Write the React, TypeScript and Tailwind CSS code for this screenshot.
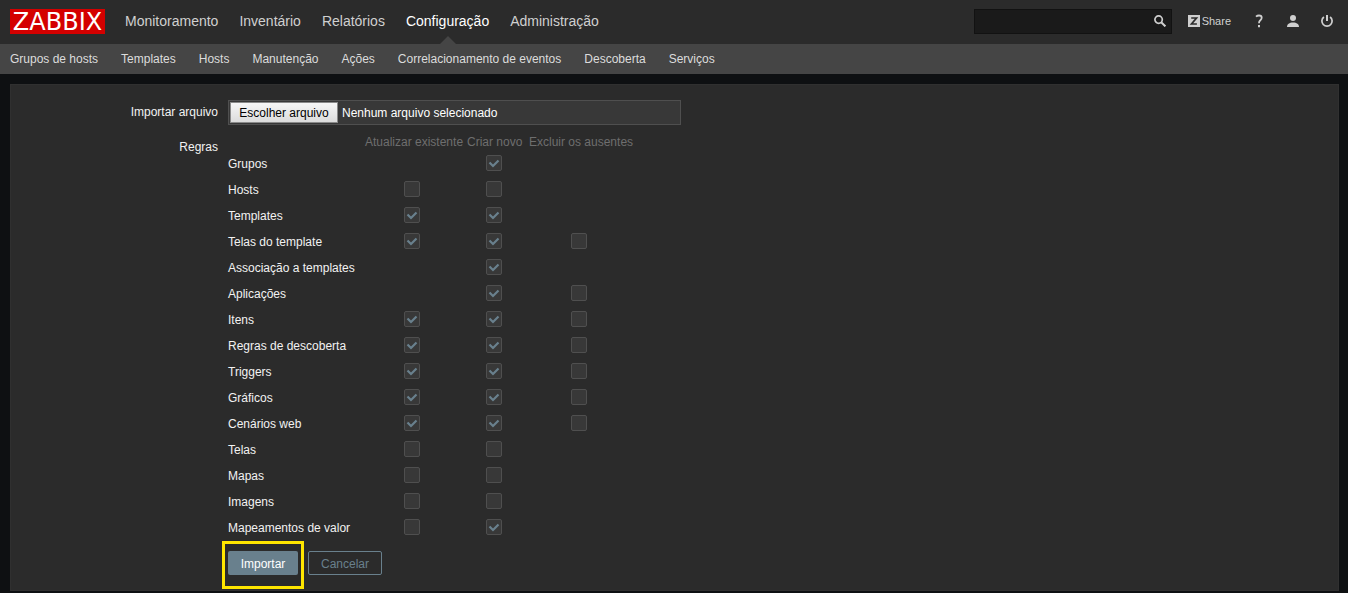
import { useState } from "react";

const mainMenu = ["Monitoramento", "Inventário", "Relatórios", "Configuração", "Administração"];
const subMenu = [
  "Grupos de hosts",
  "Templates",
  "Hosts",
  "Manutenção",
  "Ações",
  "Correlacionamento de eventos",
  "Descoberta",
  "Serviços",
];
const columns = ["Atualizar existente", "Criar novo", "Excluir os ausentes"];

type Cell = boolean | null;
const rules: { name: string; cells: [Cell, Cell, Cell] }[] = [
  { name: "Grupos", cells: [null, true, null] },
  { name: "Hosts", cells: [false, false, null] },
  { name: "Templates", cells: [true, true, null] },
  { name: "Telas do template", cells: [true, true, false] },
  { name: "Associação a templates", cells: [null, true, null] },
  { name: "Aplicações", cells: [null, true, false] },
  { name: "Itens", cells: [true, true, false] },
  { name: "Regras de descoberta", cells: [true, true, false] },
  { name: "Triggers", cells: [true, true, false] },
  { name: "Gráficos", cells: [true, true, false] },
  { name: "Cenários web", cells: [true, true, false] },
  { name: "Telas", cells: [false, false, null] },
  { name: "Mapas", cells: [false, false, null] },
  { name: "Imagens", cells: [false, false, null] },
  { name: "Mapeamentos de valor", cells: [false, true, null] },
];

function CheckBox({ label, initial }: { label: string; initial: boolean }) {
  return (
    <span className="mx-auto grid size-4">
      <input
        type="checkbox"
        aria-label={label}
        defaultChecked={initial}
        className="peer col-start-1 row-start-1 size-4 appearance-none rounded-xs border border-[#4f4f4f] bg-[#383838]"
      />
      <svg
        viewBox="0 0 16 16"
        className="pointer-events-none invisible col-start-1 row-start-1 size-4 peer-checked:visible"
        fill="none"
        stroke="#69808d"
        strokeWidth="2.2"
      >
        <path d="M3.5 7.5 7 11l5.5-5.5" />
      </svg>
    </span>
  );
}

function Header() {
  return (
    <header>
      <div className="flex h-11 items-center bg-[#2b2b2b] pr-[15px] pl-2.5">
        <a
          href="#home"
          className="mb-0.5 flex h-[25px] w-[95px] items-center justify-center bg-[#d40000] pt-0.5 font-['DejaVu_Sans',sans-serif] text-2xl leading-none text-white"
        >
          ZABBIX
        </a>
        <nav aria-label="Principal" className="ml-5 flex gap-[21px] text-sm">
          {mainMenu.map((item) => {
            const active = item === "Configuração";
            return (
              <a
                key={item}
                href="#menu"
                aria-current={active ? "page" : undefined}
                className={active ? "relative flex h-11 items-center text-white" : "flex h-11 items-center text-[#d0d0d0]"}
              >
                <span className="pb-0.5">{item}</span>
                {active && (
                  <svg viewBox="0 0 16 8" className="absolute bottom-0 left-1/2 h-2 w-4 -translate-x-1/2" fill="#454545">
                    <path d="M0 8 8 0l8 8z" />
                  </svg>
                )}
              </a>
            );
          })}
        </nav>
        <div className="ml-auto flex items-center pb-0.5">
          <form
            role="search"
            className="flex h-[25px] w-[198px] items-center border border-[#121212] bg-[#1a1a1a]"
            onSubmit={(e) => e.preventDefault()}
          >
            <input type="text" aria-label="Pesquisar" className="min-w-0 flex-1 bg-transparent px-1 text-xs text-white outline-none" />
            <button type="submit" aria-label="Pesquisar" className="grid h-6 w-[22px] place-items-center">
              <svg viewBox="0 0 12 12" className="size-3" fill="none" stroke="#cfcfcf">
                <circle cx="4.6" cy="4.6" r="3.7" strokeWidth="1.7" />
                <path d="M7.2 7.2 11.4 11.4" strokeWidth="2" />
              </svg>
            </button>
          </form>
          <a href="#share" className="ml-4 flex items-center gap-0.5 text-[11px] leading-none text-[#d0d0d0]">
            <svg viewBox="0 0 12 12" className="size-3">
              <path d="M0 0h12v12H0z" fill="#cfcfcf" />
              <path d="M3.2 3h5.3L3.5 9h5.4" fill="none" stroke="#2b2b2b" strokeWidth="1.7" />
            </svg>
            <span>Share</span>
          </a>
          <a href="#help" aria-label="Ajuda" className="ml-[22px] grid w-3 place-items-center">
            <svg viewBox="0 0 12 14" className="h-3.5 w-3" fill="none" stroke="#cfcfcf" strokeWidth="1.8">
              <path d="M3 2.6C3.900 1.800 4.800 1.500 6 1.500c1.800 0 2.700.9 2.700 2.200 0 1.400-.8 2-1.600 2.800C6.300 7.200 6 7.800 6 9.200" />
              <path d="M6 11v2.200" strokeWidth="2" />
            </svg>
          </a>
          <a href="#user" aria-label="Perfil" className="ml-[22px]">
            <svg viewBox="0 0 12 12" className="size-3" fill="#cfcfcf">
              <circle cx="6" cy="3" r="3" />
              <path d="M0 12c0-3 2.300-4.500 6-4.500s6 1.500 6 4.500z" />
            </svg>
          </a>
          <a href="#logout" aria-label="Sair" className="ml-[22px]">
            <svg viewBox="0 0 12 12" className="size-3" fill="none" stroke="#cfcfcf" strokeWidth="1.700">
              <path d="M2.900 2A5.100 5.100 0 1 0 9.100 2" />
              <path d="M6 0v6" strokeWidth="2" />
            </svg>
          </a>
        </div>
      </div>
      <nav aria-label="Secundário" className="flex h-[30px] items-center gap-[23px] bg-[#454545] pl-2.5 text-xs text-[#dcdcdc]">
        {subMenu.map((item) => (
          <a key={item} href="#section">
            {item}
          </a>
        ))}
      </nav>
    </header>
  );
}

export default function App() {
  const [file, setFile] = useState("Nenhum arquivo selecionado");
  return (
    <div className="min-h-screen bg-[#0e1012] font-['Liberation_Sans',Arial,sans-serif] text-xs text-[#f2f2f2]">
      <Header />
      <main className="mt-2.5 mr-[9px] ml-2.5 border border-[#303030] bg-[#2b2b2b] pt-[15px] pb-px">
        <form onSubmit={(e) => e.preventDefault()}>
          <div className="flex gap-2.5">
            <label htmlFor="import-file" className="w-[207px] pt-1 text-right">
              Importar arquivo
            </label>
            <div className="relative flex h-[25px] w-[453px] items-center border border-[#4f4f4f] bg-[#383838] px-px">
              <input
                id="import-file"
                type="file"
                className="peer sr-only"
                onChange={(e) => setFile(e.target.files?.[0]?.name ?? "Nenhum arquivo selecionado")}
              />
              <label
                htmlFor="import-file"
                className="flex h-[21px] w-[108px] items-center justify-center border border-[#8a8a8a] bg-linear-to-b from-[#f6f6f6] to-[#dcdcdc] text-black"
              >
                Escolher arquivo
              </label>
              <span className="ml-1 text-white">{file}</span>
            </div>
          </div>

          <div className="mt-2.5 flex gap-2.5">
            <span id="rules-label" className="w-[207px] pt-1 text-right">
              Regras
            </span>
            <table aria-labelledby="rules-label" className="w-[405px] table-fixed border-collapse">
              <colgroup>
                <col className="w-[133px]" />
                <col className="w-[102px]" />
                <col className="w-[62px]" />
                <col className="w-[108px]" />
              </colgroup>
              <thead>
                <tr className="h-[15px] text-[#6e6e6e]">
                  <td className="p-0" />
                  {columns.map((c) => (
                    <th key={c} scope="col" className="p-0 pl-1 text-left leading-[15px] font-normal whitespace-nowrap">
                      {c}
                    </th>
                  ))}
                </tr>
              </thead>
              <tbody>
                {rules.map((rule) => (
                  <tr key={rule.name} className="h-[26px]">
                    <th scope="row" className="p-0 pt-0.5 text-left font-normal whitespace-nowrap">
                      {rule.name}
                    </th>
                    {rule.cells.map((value, i) => (
                      <td key={columns[i]} className="p-0">
                        {value !== null && <CheckBox label={`${rule.name}: ${columns[i]}`} initial={value} />}
                      </td>
                    ))}
                  </tr>
                ))}
              </tbody>
            </table>
          </div>

          <div className="mt-px ml-[211px] flex items-start gap-1">
            <div className="border-3 border-[#ffe600] px-[3px] pt-[7px] pb-[11px]">
              <button type="submit" className="h-6 w-[70px] rounded-xs bg-[#69808d] pt-0.5 text-white">
                Importar
              </button>
            </div>
            <button type="button" className="mt-2.5 h-6 w-[74px] rounded-xs border border-[#69808d] pt-0.5 text-[#69808d]">
              Cancelar
            </button>
          </div>
        </form>
      </main>
    </div>
  );
}
